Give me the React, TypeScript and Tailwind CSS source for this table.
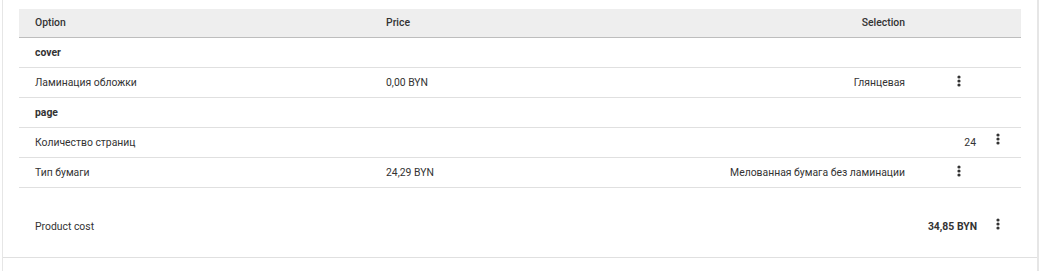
const font = { fontFamily: "Roboto, 'Noto Sans', sans-serif" };

const Dots = () => (
  <svg width="4" height="12" viewBox="0 0 4 12" className="block" aria-hidden="true">
    <circle cx="2" cy="2" r="1.6" fill="#333" />
    <circle cx="2" cy="6" r="1.6" fill="#333" />
    <circle cx="2" cy="10" r="1.6" fill="#333" />
  </svg>
);

type Row = {
  kind: "group" | "option";
  name: string;
  price?: string;
  selection?: string;
  inline?: string;
};

const rows: Row[] = [
  { kind: "group", name: "cover" },
  { kind: "option", name: "Ламинация обложки", price: "0,00 BYN", selection: "Глянцевая" },
  { kind: "group", name: "page" },
  { kind: "option", name: "Количество страниц", inline: "24" },
  { kind: "option", name: "Тип бумаги", price: "24,29 BYN", selection: "Мелованная бумага без ламинации" },
];

export default function App() {
  return (
    <div className="h-[271px] w-[1044px] bg-white pl-[2px] text-[10.4px] text-[#333]" style={font}>
      <div className="flex h-full w-[1037px] flex-col border-l border-r-2 border-[#e6e6e6]">
        <div className="px-4 pt-[9px]">
          {/* header */}
          <div className="flex h-[29px] items-center border-b border-[#bdbdbd] bg-[#eeeeee] font-medium">
            <div className="w-[367px] pl-4">Option</div>
            <div className="flex-1">Price</div>
            <div className="w-[200px] text-right">Selection</div>
            <div className="w-[116px]" />
          </div>

          {rows.map((r) => (
            <div key={r.name} className="flex h-[30px] items-center border-b border-[#e0e0e0]">
              {r.kind === "group" ? (
                <div className="pl-4 font-bold">{r.name}</div>
              ) : (
                <>
                  <div className="w-[367px] pl-4">{r.name}</div>
                  <div className="flex-1">{r.price}</div>
                  <div className="w-[200px] text-right">{r.selection}</div>
                  {r.inline ? (
                    <div className="flex w-[116px] items-center justify-end gap-[20px] pr-[21px]">
                      <span>{r.inline}</span>
                      <span className="-mt-[6px]">
                        <Dots />
                      </span>
                    </div>
                  ) : (
                    <div className="flex w-[116px] items-center pl-[52px]">
                      <span className="-mt-[4px]">
                        {r.selection && <Dots />}
                      </span>
                    </div>
                  )}
                </>
              )}
            </div>
          ))}

          {/* total */}
          <div className="flex h-[69px] items-center pt-[8px]">
            <div className="flex-1 pl-4">Product cost</div>
            <div className="flex items-center gap-[19px] pr-[21px]">
              <span className="font-bold">34,85 BYN</span>
              <span className="-mt-[4px]">
                <Dots />
              </span>
            </div>
          </div>
        </div>
        <div className="border-t border-[#e0e0e0]" />
      </div>
    </div>
  );
}
